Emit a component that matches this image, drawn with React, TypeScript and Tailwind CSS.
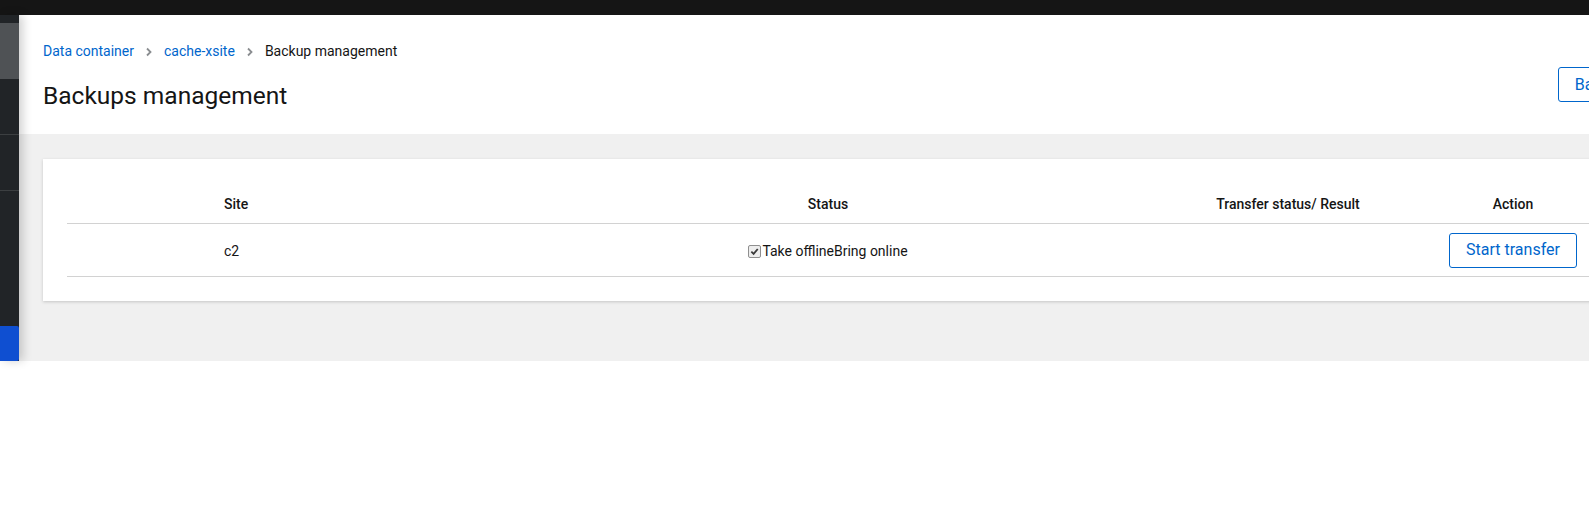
export default function App() {
  return (
    <div className="w-[1589px] h-[520px] overflow-hidden bg-white font-['Roboto',sans-serif] text-[#151515]">
      <div className="h-[15px] bg-[#151515]" />
      <div className="flex h-[346px]">
        {/* sidebar */}
        <div className="relative z-10 w-[19px] shrink-0 bg-[#212427] shadow-[4px_0_10px_rgba(0,0,0,0.18)] flex flex-col">
          <div className="h-[8px]" />
          <div className="h-[56px] bg-[#4f5255]" />
          <div className="h-[56px] border-b border-[#3c3f41]" />
          <div className="h-[56px] border-b border-[#3c3f41]" />
          <div className="flex-1" />
          <div className="h-[35px] bg-[#0f4fd1] rounded-r-[2px]" />
        </div>

        {/* main */}
        <div className="flex-1 min-w-0 flex flex-col bg-[#f0f0f0]">
          <div className="w-[1632px] bg-white px-6 pt-[26px] pb-[24px]">
            <nav className="flex items-center text-[14px] leading-[21px]">
              <a className="text-[#0066cc]">Data container</a>
              <svg className="mx-[11px] w-[8px] h-[10px]" viewBox="0 0 8 10">
                <path d="M2 1.5 L5.5 5 L2 8.5" fill="none" stroke="#8a8d90" strokeWidth="1.8" />
              </svg>
              <a className="text-[#0066cc]">cache-xsite</a>
              <svg className="mx-[11px] w-[8px] h-[10px]" viewBox="0 0 8 10">
                <path d="M2 1.5 L5.5 5 L2 8.5" fill="none" stroke="#8a8d90" strokeWidth="1.8" />
              </svg>
              <span>Backup management</span>
            </nav>
            <div className="flex items-center justify-between mt-[19px]">
              <h1 className="text-[24.5px] leading-[29px] font-normal">Backups management</h1>
              <button className="h-[35px] px-4 border border-[#0066cc] rounded-[3px] text-[16px] text-[#0066cc] -mt-[22px]">
                Back
              </button>
            </div>
          </div>

          <div className="w-[1632px] px-6 pt-[25px]">
            <div className="bg-white shadow-[0_1px_3px_rgba(0,0,0,0.18)] px-6 pt-6 pb-6">
              <div className="grid grid-cols-[141px_288px_664px_256px_1fr] text-[14px]">
                <div className="h-[41px] border-b border-[#d2d2d2]" />
                <div className="h-[41px] border-b border-[#d2d2d2] pl-4 pt-[3px] flex items-center font-medium">Site</div>
                <div className="h-[41px] border-b border-[#d2d2d2] pt-[3px] flex items-center justify-center font-medium">Status</div>
                <div className="h-[41px] border-b border-[#d2d2d2] pt-[3px] flex items-center justify-center font-medium">
                  Transfer status/ Result
                </div>
                <div className="h-[41px] border-b border-[#d2d2d2] pt-[3px] flex items-center font-medium">
                  <span className="w-[194px] text-center">Action</span>
                </div>

                <div className="h-[53px] border-b border-[#d2d2d2]" />
                <div className="h-[53px] border-b border-[#d2d2d2] pl-4 pt-[2px] flex items-center">c2</div>
                <div className="h-[53px] border-b border-[#d2d2d2] pt-[2px] flex items-center justify-center">
                  <label className="flex items-center">
                    <span className="w-[13px] h-[13px] mr-[1px] rounded-[2px] border border-[#8f8f8f] bg-[#ededed] flex items-center justify-center">
                      <svg className="w-[9px] h-[9px]" viewBox="0 0 10 10">
                        <path d="M1.5 5.2 L4 7.6 L8.6 2.2" fill="none" stroke="#3a3a3a" strokeWidth="2" />
                      </svg>
                    </span>
                    <span>Take offline</span>
                    <span>Bring online</span>
                  </label>
                </div>
                <div className="h-[53px] border-b border-[#d2d2d2]" />
                <div className="h-[53px] border-b border-[#d2d2d2] flex items-center">
                  <div className="w-[194px] flex justify-center">
                    <button className="w-[128px] h-[35px] border border-[#0066cc] rounded-[3px] text-[16px] text-[#0066cc]">
                      Start transfer
                    </button>
                  </div>
                </div>
              </div>
            </div>
          </div>
        </div>
      </div>
    </div>
  )
}
